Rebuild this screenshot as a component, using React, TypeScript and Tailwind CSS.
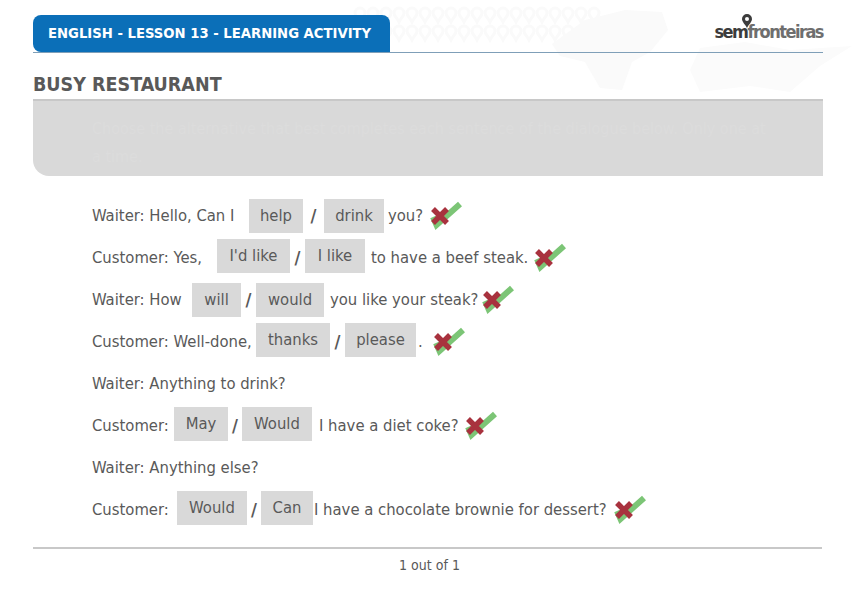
const rowFont = "font-['Tahoma','DejaVu_Sans_Condensed','DejaVu_Sans',sans-serif]"

function Pill({ children, width, lift }: { children: React.ReactNode; width: string; lift?: boolean }) {
  return (
    <span className={`flex h-[34px] shrink-0 items-center justify-center bg-[#d9d9d9] text-[#595959] ${width} ${lift ? 'mb-1' : ''}`}>
      {children}
    </span>
  )
}

function Slash({ width }: { width: string }) {
  return <span className={`shrink-0 text-center text-[18px] font-bold text-[#595959] ${width}`}>/</span>
}

function Marks() {
  return (
    <svg width="32" height="30" viewBox="0 0 32 30" className="mb-[2px] shrink-0">
      <path d="M3 17 L6.5 25 L30 4" fill="none" stroke="#7cc576" strokeWidth="6" />
      <path d="M3 9 L17 23 M17 9 L3 23" fill="none" stroke="#a8323e" strokeWidth="5.5" />
    </svg>
  )
}

function Backdrop() {
  const pins = Array.from({ length: 19 }, (_, i) => i)
  return (
    <svg className="absolute left-0 top-0" width="860" height="100" viewBox="0 0 860 100">
      {pins.map((i) => (
        <g key={i} fill="none" stroke="#fafafa" strokeWidth="3">
          <path transform={`translate(${355 + i * 13} 8)`} d="M5 0a5 5 0 0 1 5 5c0 3-3 5-5 9c-2-4-5-6-5-9a5 5 0 0 1 5-5z" />
          <path transform={`translate(${355 + i * 13} 26)`} d="M5 0a5 5 0 0 1 5 5c0 3-3 5-5 9c-2-4-5-6-5-9a5 5 0 0 1 5-5z" />
        </g>
      ))}
      <path d="M552 44 L585 20 L625 10 L662 12 L668 30 L650 52 L632 62 L622 90 L600 88 L585 62 L560 56 Z" fill="#fafafa" />
      <path d="M700 48 L745 42 L790 50 L852 46 L820 66 L790 92 L750 86 L700 92 L690 70 Z" fill="#fbfbfb" />
    </svg>
  )
}

export default function App() {
  return (
    <div className={`relative h-[600px] w-[860px] overflow-hidden bg-white text-[16.5px] text-[#595959] ${rowFont}`}>
      <Backdrop />
      <div className="relative px-[33px] pt-4 pr-[37px]">
        <div className="flex h-[37px] items-end justify-between border-b border-[#7f9fb8]">
          <div className="flex h-[37px] w-[357px] items-center rounded-t-lg rounded-bl-lg bg-[#0b6fb8] pl-[15px] text-[14.7px] font-bold text-white">
            ENGLISH - LESSON 13 - LEARNING ACTIVITY
          </div>
          <div className="relative mb-[11px] text-[18px] font-semibold leading-none tracking-[-1.5px]">
            <svg className="absolute left-[27px] top-[-9px]" width="12" height="14" viewBox="0 0 12 14">
              <path d="M6 0a5 5 0 0 1 5 5c0 3-3 5-5 9c-2-4-5-6-5-9a5 5 0 0 1 5-5z" fill="#3c3c3c" />
              <circle cx="6" cy="5" r="2" fill="#fff" />
            </svg>
            <span className="font-bold text-[#3c3c3c]">sem</span>
            <span className="text-[#6e6e6e]">fronteiras</span>
          </div>
        </div>
        <h1 className="mt-[19px] h-[27px] text-[19.5px] font-bold leading-[26px] text-[#595959]">BUSY RESTAURANT</h1>
        <div className="h-[77px] rounded-bl-2xl border-t-2 border-[#c8c8c8] bg-[#d9d9d9] pl-[59px] pr-[50px] pt-[14px] text-[16px] leading-[28px] text-[#dcdcdc]">
          Choose the alternative that best completes each sentence of the dialogue below. Only one at a time.
        </div>
      </div>
      <div className="relative mt-[19px] pl-[92px] leading-none">
        <div className="flex h-[42px] items-center">
          <span className="w-[157px] shrink-0 whitespace-nowrap">Waiter: Hello, Can I</span>
          <Pill width="w-[54px]">help</Pill>
          <Slash width="w-[21px]" />
          <Pill width="w-[60px]">drink</Pill>
          <span className="ml-1 w-[42px] shrink-0">you?</span>
          <Marks />
        </div>
        <div className="flex h-[42px] items-center">
          <span className="w-[125px] shrink-0 whitespace-nowrap">Customer: Yes,</span>
          <Pill width="w-[73px]" lift>I'd like</Pill>
          <Slash width="w-[15px]" />
          <Pill width="w-[60px]" lift>I like</Pill>
          <span className="ml-[6px] w-[163px] shrink-0 whitespace-nowrap">to have a beef steak.</span>
          <Marks />
        </div>
        <div className="flex h-[42px] items-center">
          <span className="w-[100px] shrink-0 whitespace-nowrap">Waiter: How</span>
          <Pill width="w-[49px]">will</Pill>
          <Slash width="w-[15px]" />
          <Pill width="w-[68px]">would</Pill>
          <span className="ml-[6px] w-[152px] shrink-0 whitespace-nowrap">you like your steak?</span>
          <Marks />
        </div>
        <div className="flex h-[42px] items-center">
          <span className="w-[164px] shrink-0 whitespace-nowrap">Customer: Well-done,</span>
          <Pill width="w-[74px]" lift>thanks</Pill>
          <Slash width="w-[15px]" />
          <Pill width="w-[71px]" lift>please</Pill>
          <span className="ml-[2px] w-[15px] shrink-0">.</span>
          <Marks />
        </div>
        <div className="flex h-[42px] items-center">Waiter: Anything to drink?</div>
        <div className="flex h-[42px] items-center">
          <span className="w-[82px] shrink-0 whitespace-nowrap">Customer:</span>
          <Pill width="w-[54px]" lift>May</Pill>
          <Slash width="w-[14px]" />
          <Pill width="w-[70px]" lift>Would</Pill>
          <span className="ml-[7px] w-[146px] shrink-0 whitespace-nowrap">I have a diet coke?</span>
          <Marks />
        </div>
        <div className="flex h-[42px] items-center">Waiter: Anything else?</div>
        <div className="flex h-[42px] items-center">
          <span className="w-[85px] shrink-0 whitespace-nowrap">Customer:</span>
          <Pill width="w-[70px]" lift>Would</Pill>
          <Slash width="w-[14px]" />
          <Pill width="w-[52px]" lift>Can</Pill>
          <span className="ml-[1px] w-[300px] shrink-0 whitespace-nowrap">I have a chocolate brownie for dessert?</span>
          <Marks />
        </div>
      </div>
      <div className="relative mx-[33px] mt-[16px] mr-[38px] border-t-2 border-[#c8c8c8] pl-[4px] pt-[8px] text-center text-[14px] leading-[16px]">
        1 out of 1
      </div>
    </div>
  )
}
